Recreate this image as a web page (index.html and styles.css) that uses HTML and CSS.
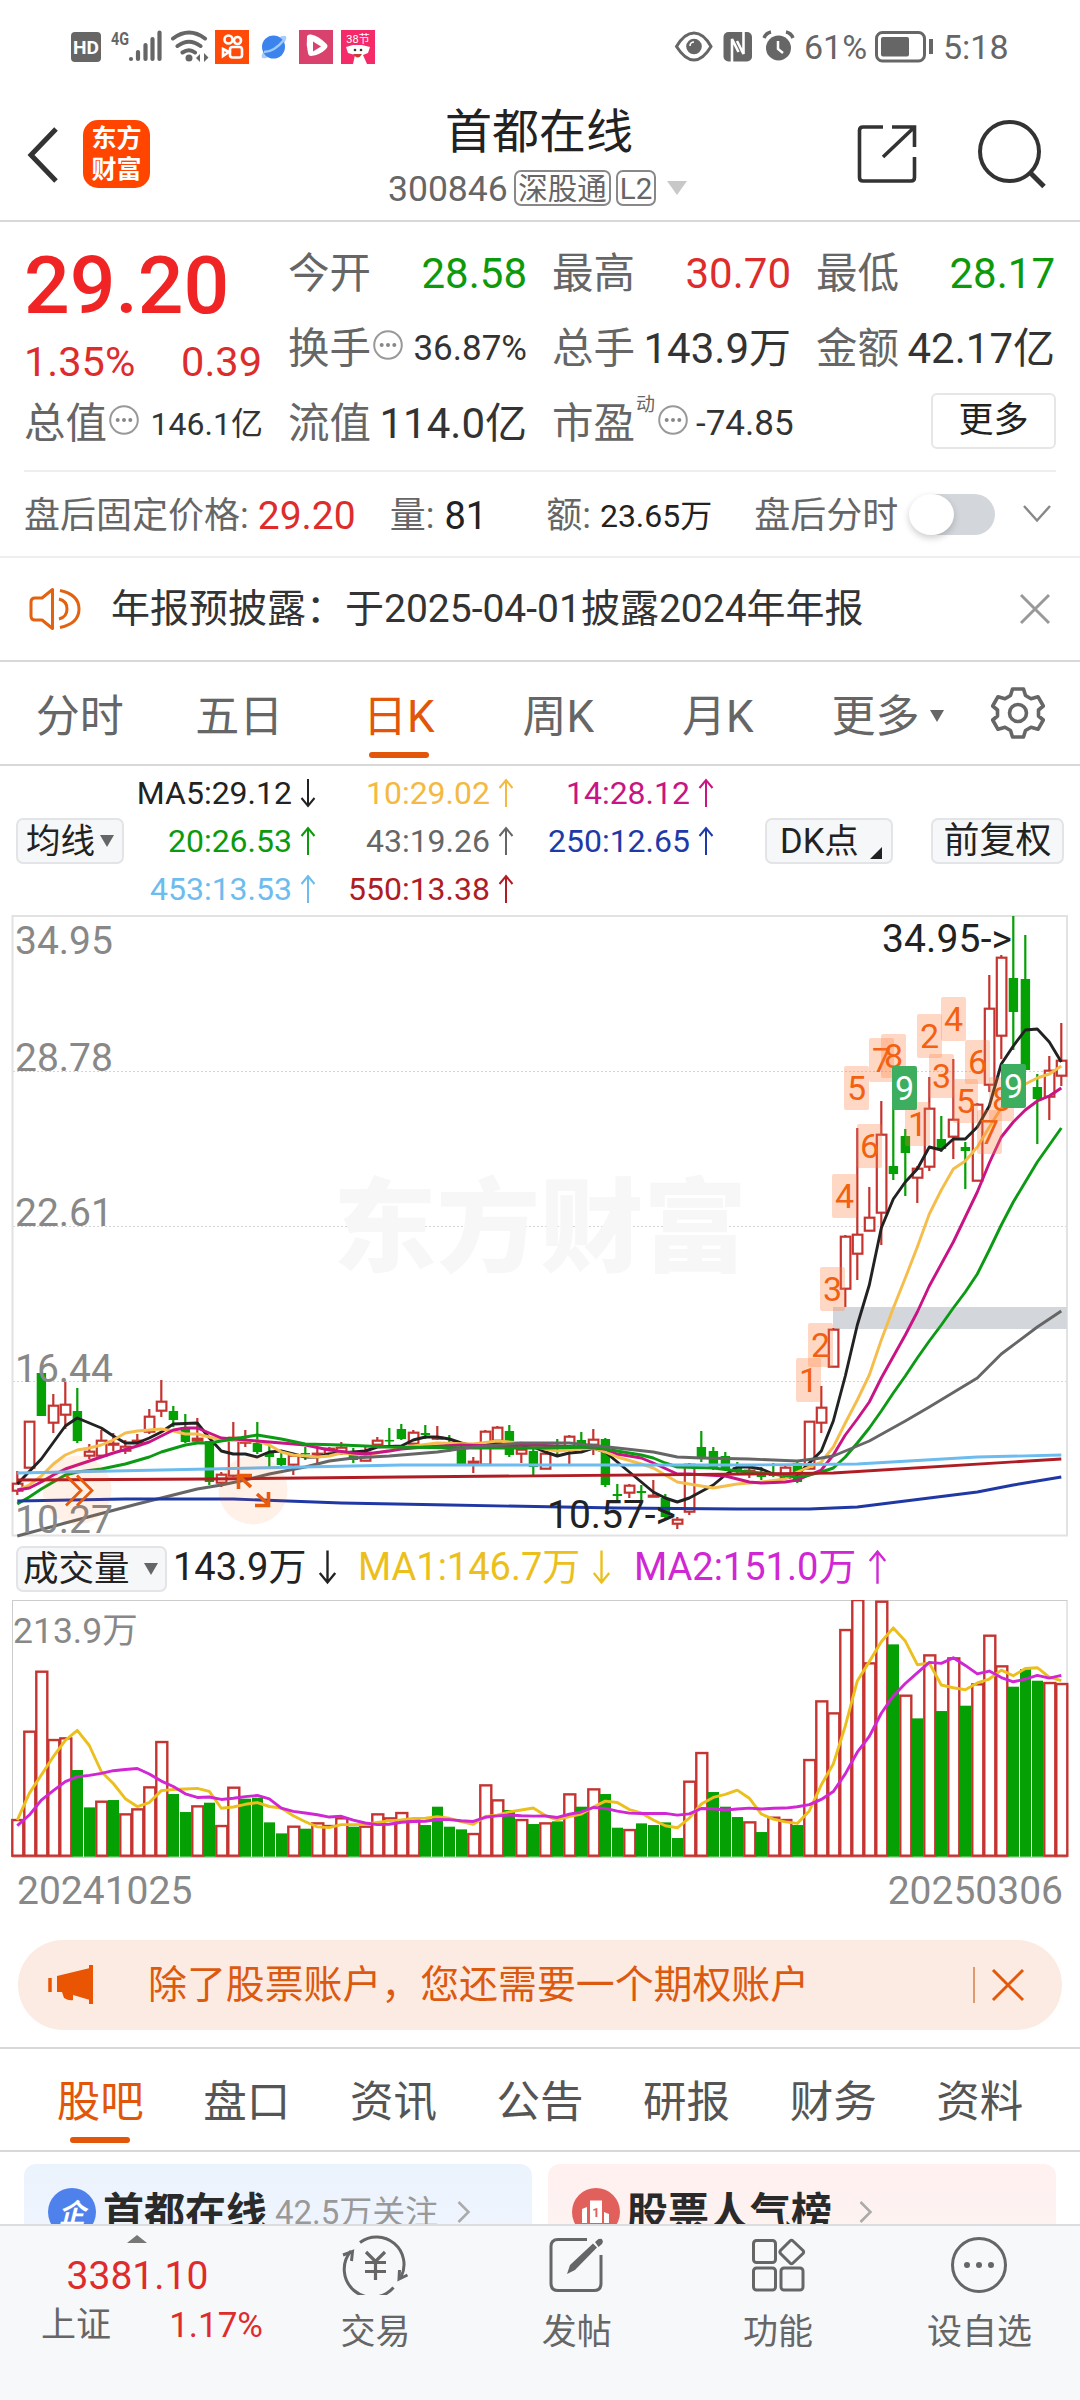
FILE: index.html
```html
<!DOCTYPE html>
<html lang="zh-CN">
<head>
<meta charset="utf-8">
<title>首都在线 300846</title>
<link rel="stylesheet" href="styles.css">
</head>
<body>
<div class="app">
  <div class="status">
    <div class="status-left">
      <svg width="276" height="36" viewBox="70 29 276 36">
        <rect x="71" y="32" width="30" height="30" rx="4" fill="#666"/>
        <text x="86" y="53.500" font-size="19" font-weight="700" fill="#fff" text-anchor="middle" textLength="26" lengthAdjust="spacingAndGlyphs">HD</text>
        <text x="111" y="44.500" font-size="18" font-weight="700" fill="#666" textLength="18" lengthAdjust="spacingAndGlyphs">4G</text>
        <path d="M131 59v0M138 52v7M145.500 45v14M152.500 39v20M159.500 32.500v26.500" stroke="#666" stroke-width="4.200" stroke-linecap="round"/>
        <g fill="none" stroke="#666" stroke-width="4" stroke-linecap="round"><path d="M173 38.500q16-12 32 0M177.500 46q11.500-8.500 23 0M182.500 52.500q6.500-4.500 12.500 0"/></g>
        <circle cx="189" cy="58" r="3.500" fill="#666"/>
        <path d="M200 54v8l-4-4zM204 53v9l4.500-4.500z" fill="#666"/>
        <rect x="215" y="30" width="34" height="34" fill="#ff4a08"/>
        <g fill="none" stroke="#fff" stroke-width="2.600"><circle cx="228.500" cy="39.500" r="4"/><circle cx="237.500" cy="40.500" r="3.500"/><rect x="230" y="47" width="12" height="10.500" rx="2.500"/><path d="M223 49l6 3-6 4z"/></g>
        <ellipse cx="274" cy="47" rx="16" ry="5" fill="#a9cdfa" transform="rotate(-42 274 47)"/>
        <circle cx="273.500" cy="47" r="11.500" fill="#3d83ee"/>
        <path d="M264 52q10 0 20-12" stroke="#9bcafc" stroke-width="2.500" fill="none"/>
        <rect x="299" y="30" width="34" height="34" fill="#d9426c"/>
        <path d="M307 37q0-3 4-2.500 7 1 15 9 3 2.500 0 5.500-6 6-15 7-2.500 0-3-3-2-8-1-16z" fill="#fff"/><path d="M313 41.500l8 5-8 5z" fill="#d9426c"/>
      </svg>
      <svg class="promo" width="34" height="36" viewBox="341 29 34 36">
        <rect x="341" y="30" width="34" height="34" fill="#f52a68"/>
        <text x="358" y="43" font-size="11" fill="#fff" text-anchor="middle">38节</text>
        <path d="M346 47l7-2h9l8 2-2 6-5 2 4 9h-14l2-9-7-2z" fill="#fff"/><path d="M353 54q5 7 9 0z" fill="#c93c35"/><circle cx="355" cy="50" r="1.300" fill="#333"/><circle cx="361" cy="50" r="1.300" fill="#333"/>
      </svg>
    </div>
    <div class="status-right">
      <svg width="122" height="36" viewBox="674 29 122 36">
        <path d="M676.500 46.500q8-13.500 17.500-13.500t17 13.500q-8 13.500-17 13.500t-17.500-13.500z" fill="none" stroke="#666" stroke-width="3"/>
        <circle cx="694" cy="46.500" r="7.800" fill="#666"/><path d="M690 46a4 4 0 0 1 4-4" stroke="#fff" stroke-width="1.600" fill="none"/>
        <rect x="723.500" y="32" width="28.500" height="29.500" rx="5" fill="#666"/>
        <path d="M732 63V39l6.500 13M743.500 30v24L737 41" fill="none" stroke="#fff" stroke-width="2.600"/>
        <circle cx="778.500" cy="48" r="12.500" fill="#666"/><path d="M778 41v8l5 4" stroke="#fff" stroke-width="2.500" fill="none"/>
        <path d="M764 38q2-5 7-6M786 32q5 1 7 6" stroke="#666" stroke-width="3.500" fill="none"/>
      </svg>
      <span class="status-text pct">61%</span>
      <svg width="60" height="34" viewBox="874 30 60 34">
        <rect x="876.500" y="32.500" width="48" height="28.500" rx="6" fill="none" stroke="#666" stroke-width="3"/>
        <rect x="881" y="37" width="28" height="19.500" rx="2" fill="#666"/><path d="M931 39v15" stroke="#666" stroke-width="4"/>
      </svg>
      <span class="status-text clock">5:18</span>
    </div>
  </div>

  <header class="header">
    <div class="head-left">
      <svg width="36" height="58" viewBox="25 125 36 58"><path d="M56 129L31 155l25 26" fill="none" stroke="#333" stroke-width="5"/></svg>
      <div class="logo"><span>东方</span><span>财富</span></div>
    </div>
    <div class="head-mid">
      <div class="title">首都在线</div>
      <div class="sub"><span class="code">300846</span><span class="tag">深股通</span><span class="tag tag-l2">L2</span><i class="caret"></i></div>
    </div>
    <div class="head-right">
      <svg width="60" height="60" viewBox="857 125 60 60"><path d="M883 128H863q-3.500 0-3.500 3.500v47q0 3.500 3.500 3.500h48q3.500 0 3.500-3.500V158M892 128h22.500v20M913 129.500L883 158" fill="none" stroke="#333" stroke-width="3.600"/></svg>
      <svg width="70" height="70" viewBox="976 119 70 70"><circle cx="1009.500" cy="151.500" r="29.500" fill="none" stroke="#333" stroke-width="4"/><path d="M1030 172.500l14 14" stroke="#333" stroke-width="5"/></svg>
    </div>
  </header>

  <section class="quote">
    <div class="price-block">
      <div class="price">29.20</div>
      <div class="change"><span>1.35%</span><span>0.39</span></div>
    </div>
    <div class="cell"><span class="lab">今开</span><b class="dn">28.58</b></div>
    <div class="cell"><span class="lab">最高</span><b class="up">30.70</b></div>
    <div class="cell"><span class="lab">最低</span><b class="dn">28.17</b></div>
    <div class="cell"><span class="lab">换手</span><svg class="more-dot"><use href="#dots"/></svg><b class="m">36.87%</b></div>
    <div class="cell"><span class="lab">总手</span><b>143.9万</b></div>
    <div class="cell"><span class="lab">金额</span><b>42.17亿</b></div>
    <div class="cell"><span class="lab">总值</span><svg class="more-dot"><use href="#dots"/></svg><b class="s">146.1亿</b></div>
    <div class="cell"><span class="lab">流值</span><b>114.0亿</b></div>
    <div class="cell"><span class="lab">市盈</span><span class="sup">动</span><svg class="more-dot pe"><use href="#dots"/></svg><b class="m">-74.85</b></div>
    <div class="cell end"><span class="more-btn">更多</span></div>
  </section>

  <section class="after">
    <span class="al">盘后固定价格:</span><span class="av up av-price">29.20</span>
    <span class="al al-vol">量:</span><span class="av">81</span>
    <span class="al al-amt">额:</span><span class="av small">23.65万</span>
    <span class="al al-min">盘后分时</span><span class="toggle"><i></i></span>
    <svg class="chev" width="30" height="20" viewBox="0 0 30 20"><path d="M2 2l13 14.500L28 2" fill="none" stroke="#888" stroke-width="2.400"/></svg>
  </section>

  <section class="notice">
    <svg width="54" height="48" viewBox="29 584 54 48"><g fill="none" stroke="#e2620f" stroke-width="3"><path d="M52.500 588.500v39L42 619h-7q-4 0-4-4v-14q0-4 4-4h7z" stroke-linejoin="round"/><path d="M59 598q8 2 8 10t-8 10M60 589.500q19 4 19 18.500t-19 18.500"/></g></svg>
    <span class="notice-text">年报预披露：于2025-04-01披露2024年年报</span>
    <svg class="x" width="32" height="32" viewBox="0 0 32 32"><path d="M2 2l28 28M30 2L2 30" stroke="#999" stroke-width="3"/></svg>
  </section>

  <nav class="ktabs">
    <span>分时</span><span>五日</span><span class="on">日K</span><span>周K</span><span>月K</span><span class="kmore">更多<i class="caret"></i></span>
    <svg width="54" height="54" viewBox="-27 -27 54 54"><g fill="none" stroke="#666" stroke-width="3.600"><path stroke-linejoin="round" d="M-5.500-24h11l2 6.500 5.500 3.200 7-2 5.300 9.300L20.500-3v6l4.800 4L20 16.300l-7-2-5.500 3.200-2 6.500h-11l-2-6.500-5.500-3.200-7 2L-25.300 7l4.800-4v-6l-4.800-4L-20-16.300l7 2 5.500-3.200z"/><circle r="8.500"/></g></svg>
  </nav>

  <section class="legend">
    <div class="chip ma-chip">均线<i class="caret"></i></div>
    <div class="mas">
      <span class="c-ma5">MA5:29.12<svg class="ar"><use href="#down"/></svg></span><span class="c-ma10">10:29.02<svg class="ar"><use href="#up"/></svg></span><span class="c-ma14">14:28.12<svg class="ar"><use href="#up"/></svg></span>
      <span class="c-ma20">20:26.53<svg class="ar"><use href="#up"/></svg></span><span class="c-ma43">43:19.26<svg class="ar"><use href="#up"/></svg></span><span class="c-ma250">250:12.65<svg class="ar"><use href="#up"/></svg></span>
      <span class="c-ma453">453:13.53<svg class="ar"><use href="#up"/></svg></span><span class="c-ma550">550:13.38<svg class="ar"><use href="#up"/></svg></span>
    </div>
    <div class="chip dk-chip">DK点<i class="corner"></i></div>
    <div class="chip fq-chip">前复权</div>
  </section>
  <svg width="0" height="0" class="defs"><defs>
    <symbol id="up" viewBox="0 0 16 30"><path d="M8 29V2M1.500 10L8 2l6.500 8" fill="none" stroke="currentColor" stroke-width="2"/></symbol>
    <symbol id="down" viewBox="0 0 16 30"><path d="M8 1v27M1.500 20L8 28l6.500-8" fill="none" stroke="currentColor" stroke-width="2"/></symbol>
    <symbol id="dots" viewBox="0 0 30 30"><circle cx="15" cy="15" r="13.800" fill="none" stroke="#999" stroke-width="2"/><g fill="#888"><circle cx="8.700" cy="15" r="2"/><circle cx="15" cy="15" r="2"/><circle cx="21.300" cy="15" r="2"/></g></symbol>
  </defs></svg>

  <svg class="kchart" width="1080" height="626" viewBox="0 12 1080 626">
    <g id="k-grid">
      <path d="M13 171.500H1067M13 326.500H1067M13 481.500H1067" stroke="#d4d4d4" stroke-width="1" stroke-dasharray="2 2"/>
      <text class="watermark" x="333" y="364" textLength="414" lengthAdjust="spacingAndGlyphs">东方财富</text>
      <rect x="12.500" y="16" width="1054.500" height="619.500" fill="none" stroke="#e2e2e2" stroke-width="2"/>
      <rect x="833" y="407" width="234" height="22" fill="#d3d7dc"/>
    </g>
    <g id="k-candles"></g>
    <g id="k-lines"></g>
    <g class="axis"><text x="15" y="54">34.95</text><text x="15" y="171">28.78</text><text x="15" y="326">22.61</text><text x="15" y="482">16.44</text><text x="15" y="633">10.27</text></g>
    <g fill="#ff5a00" fill-opacity=".09"><circle cx="77" cy="590" r="34.500"/><circle cx="253" cy="590" r="34.500"/></g>
    <g fill="none" stroke="#e85a0c" stroke-width="2.800"><path d="M66 575.500L81 590.500 66 605.500M77 575.500L92 590.500 77 605.500"/><path stroke-width="3.600" d="M251 587l-12-11M238.500 589V575.500H252M257 594l12 11M268.500 592v13.500H255"/></g>
    <g id="k-marks"></g>
    <g class="peak"><text x="882" y="52" textLength="130">34.95-&gt;</text><text x="547" y="628" textLength="129">10.57-&gt;</text></g>
  </svg>

  <section class="vol-legend">
    <div class="chip vol-chip">成交量<i class="caret"></i></div>
    <span class="v0">143.9万<svg class="ar big"><use href="#down"/></svg></span>
    <span class="v1">MA1:146.7万<svg class="ar big"><use href="#down"/></svg></span>
    <span class="v2">MA2:151.0万<svg class="ar big"><use href="#up"/></svg></span>
  </section>

  <svg class="vchart" width="1080" height="260" viewBox="0 1600 1080 260">
    <rect x="12.500" y="1600.500" width="1054.500" height="257" fill="none" stroke="#ccc"/>
    <text x="13" y="1642.500" font-size="35.500" fill="#888">213.9万</text>
    <g id="v-bars"></g>
    <g id="v-lines"></g>
  </svg>
  <div class="dates"><span>20241025</span><span>20250306</span></div>

  <section class="banner">
    <svg width="48" height="42" viewBox="47 1964 48 42"><path d="M91 1965v39" stroke="#ea5504" stroke-width="4"/><path d="M50 1978v14" stroke="#ea5504" stroke-width="3.500"/><path d="M90 1968v32l-17-5v5q-4 1-9-2l-2-6h-5v-16z" fill="#ea5504"/></svg>
    <span class="banner-text">除了股票账户，您还需要一个期权账户</span>
    <i class="sep"></i>
    <svg width="34" height="34" viewBox="0 0 34 34"><path d="M2 2l30 30M32 2L2 32" stroke="#e2590c" stroke-width="3"/></svg>
  </section>

  <nav class="tabs"><span class="on">股吧</span><span>盘口</span><span>资讯</span><span>公告</span><span>研报</span><span>财务</span><span>资料</span></nav>

  <section class="cards">
    <div class="card blue">
      <svg width="48" height="48" viewBox="0 0 48 48"><circle cx="24" cy="24" r="24" fill="#4f81ec"/><text x="24" y="35" font-size="27" font-weight="700" font-style="italic" fill="#fff" text-anchor="middle">企</text></svg>
      <b>首都在线</b><span>42.5万关注</span>
      <svg class="go" width="14" height="24" viewBox="0 0 14 24"><path d="M1.500 2l10 10-10 10" fill="none" stroke="#aaa" stroke-width="2.500"/></svg>
    </div>
    <div class="card red">
      <svg width="48" height="48" viewBox="0 0 48 48"><circle cx="24" cy="24" r="24" fill="#e2605c"/><path d="M10 21l5-2v16h-5zM18 12.500h12V35H18zM32 24l5 2v9h-5z" fill="#fff"/><text x="24" y="29" font-size="13" font-weight="700" fill="#e2605c" text-anchor="middle">1</text></svg>
      <b>股票人气榜</b>
      <svg class="go wide" width="14" height="24" viewBox="0 0 14 24"><path d="M1.500 2l10 10-10 10" fill="none" stroke="#aaa" stroke-width="2.500"/></svg>
    </div>
  </section>

  <footer class="bottom">
    <div class="index"><i class="tri"></i><div class="idx">3381.10</div><div class="idx-row"><span>上证</span><span class="up">1.17%</span></div></div>
    <div class="item"><svg width="68" height="60" viewBox="342 2234 68 60"><g fill="none" stroke="#666" stroke-width="3"><path d="M360 2241.500A27.500 27.500 0 0 1 401 2276M393.500 2286.500A27.500 27.500 0 0 1 351 2250"/><path d="M343 2254l9.500-3.500-1 9.500M399.500 2269l-.5 9 8.500-4"/><path d="M366 2251l9.500 9.500 9.500-9.500M365 2261.500h21M365 2270.500h21M375.500 2260v19" stroke-width="3.200"/></g></svg><span>交易</span></div>
    <div class="item"><svg width="60" height="60" viewBox="548 2234 60 60"><path d="M588 2238.500h-29q-7 0-7 7v37q0 7 7 7h36q7 0 7-7V2254" fill="none" stroke="#666" stroke-width="3"/><path d="M568 2273l3-9 23-21.500 4 4L576 2269zM596 2241l3.500-3q3-1 4 1t-.5 4l-3.500 3z" fill="#666"/></svg><span>发帖</span></div>
    <div class="item"><svg width="60" height="60" viewBox="748 2234 60 60"><g fill="none" stroke="#666" stroke-width="3"><rect x="753.500" y="2239.500" width="22" height="22" rx="3"/><rect x="753.500" y="2267" width="22" height="22" rx="3"/><rect x="781" y="2267" width="22" height="22" rx="3"/><path d="M790 2240q1.500-1.500 3 0l10 9.500q1.200 1.500 0 3l-10 9.500q-1.500 1.500-3 0l-9.500-9.500q-1.200-1.500 0-3z"/></g></svg><span>功能</span></div>
    <div class="item"><svg width="60" height="60" viewBox="-30 -30 60 60"><circle r="26.500" fill="none" stroke="#666" stroke-width="3"/><g fill="#666"><circle cx="-12" r="3"/><circle r="3"/><circle cx="12" r="3"/></g></svg><span>设自选</span></div>
  </footer>
</div>
<script src="chart.js"></script>
</body>
</html>
```
FILE: styles.css
```css
* { box-sizing: border-box; }
body { margin: 0; background: #fff; font-family: Roboto, "Noto Sans CJK SC", sans-serif; color: #222; }
i, b { font-style: normal; font-weight: 400; }
svg { display: block; flex: none; }
.app { width: 1080px; height: 2400px; overflow: hidden; display: flex; flex-direction: column; white-space: nowrap; }
.app > * { flex: none; }
.defs { height: 0; }
.up { color: #de2c2c; }
.dn { color: #0c9a0c; }
.caret { display: inline-block; border: solid transparent; border-width: 12px 7px 0; border-top-color: #666; }

.status { height: 92px; padding: 1px 72px 0 70px; display: flex; align-items: center; justify-content: space-between; }
.status-left, .status-right { display: flex; align-items: center; }
.promo { margin-left: -5px; }
.status-text { font-size: 34px; color: #666; line-height: 36px; }
.pct { width: 69px; margin-left: 8px; margin-right: 1px; }
.clock { margin-left: 9px; width: 65px; }

.header { height: 130px; border-bottom: 2px solid #d8d8d8; display: grid; grid-template-columns: 388px 302px 1fr; }
.head-left { display: flex; align-items: center; padding: 0 0 4px 25px; }
.logo { margin-left: 22px; width: 67px; height: 68px; border-radius: 15px; background: #ff4500; color: #fff; font-size: 25px; font-weight: 600; line-height: 31px; padding-top: 3px; display: flex; flex-direction: column; align-items: center; }
.title { font-size: 47px; line-height: 56px; padding-top: 12px; text-align: center; color: #222; }
.sub { display: flex; align-items: center; margin-top: 10px; height: 36px; color: #666; }
.code { font-size: 35.500px; width: 126px; padding-top: 1px; }
.tag { border: 2px solid #888; border-radius: 7px; width: 97px; height: 36px; line-height: 34px; font-size: 29.500px; text-align: center; }
.tag-l2 { width: 40px; margin-left: 5px; }
.sub .caret { margin-left: 11px; border-width: 14px 10.500px 0; border-top-color: #c8c8c8; }
.head-right { display: flex; align-items: center; justify-content: flex-end; gap: 59px; padding: 0 34px 4px 0; }

.quote { margin: 0 24px 0 24px; height: 250px; padding-top: 14px; border-bottom: 2px solid #eee; display: grid; grid-template-columns: repeat(4, 239px); grid-template-rows: repeat(3, 75px); column-gap: 25px; color: #333; }
.price-block { grid-row: span 2; }
.price { font-size: 80.500px; font-weight: 500; line-height: 96px; color: #f02424; padding-top: 2px; height: 106px; }
.change { display: flex; justify-content: space-between; font-size: 41.500px; line-height: 40px; color: #de2c2c; padding-right: 1px; }
.cell { display: flex; align-items: center; }
.cell b { margin-left: auto; font-size: 42px; line-height: 50px; }
.cell b.m { font-size: 35px; }
.cell b.s { font-size: 32px; }
.lab { font-size: 41.500px; line-height: 50px; color: #666; }
.more-dot { width: 30px; height: 30px; margin: -8px 0 0 2px; }
.more-dot.pe { margin-left: 3px; }
.sup { font-size: 19px; line-height: 20px; margin: -38px 0 0 1px; color: #666; }
.cell:has(.sup) b { margin-left: 8px; }
.end { justify-content: flex-end; }
.more-btn { width: 125px; height: 56px; margin: -5px -1px 0 0; border: 2px solid #e6e6e6; border-radius: 6px; font-size: 35px; line-height: 52px; text-align: center; color: #222; }

.after { height: 86px; border-bottom: 2px solid #eee; padding: 4px 28px 0 24px; display: flex; align-items: center; font-size: 36px; line-height: 44px; }
.al { color: #666; }
.av { margin-left: 9px; font-size: 38px; color: #222; }
.av.av-price { color: #de2c2c; font-size: 39px; }
.al-vol { margin-left: 34px; }
.av-price + .al-vol + .av { margin-left: 10px; }
.al-amt { margin-left: 59px; }
.av.small { font-size: 32px; }
.al-min { margin-left: 42px; }
.toggle { margin: -4px 0 0 19px; width: 78px; height: 41px; border-radius: 21px; background: #d3d7dc; }
.toggle i { display: block; width: 45px; height: 41px; margin-left: -8px; border-radius: 50%; background: #fff; box-shadow: 0 3px 7px #0003; }
.chev { margin: -4px 0 0 auto; }

.notice { height: 104px; border-bottom: 2px solid #d8d8d8; padding: 0 29px 0 29px; display: flex; align-items: center; }
.notice-text { font-size: 39px; line-height: 50px; margin-left: 28px; color: #333; flex: 1; }

.ktabs { height: 104px; border-bottom: 2px solid #d8d8d8; display: flex; padding: 0 35px 0 0; align-items: center; font-size: 44px; line-height: 96px; color: #666; }
.ktabs > span { width: 159.500px; text-align: center; padding-top: 6px; height: 100px; }
.ktabs .on { color: #e2560a; }
.on::after { content: ""; display: block; width: 60px; height: 6px; border-radius: 3px; background: #e2560a; margin: -13px auto 0; }
.ktabs .kmore { text-align: left; padding-left: 34px; width: 192px; }
.kmore .caret { margin: 0 0 10px 10px; }
.ktabs svg { margin-left: auto; }

.legend { height: 146px; display: flex; align-items: center; padding: 3px 16px 0; }
.chip { display: flex; align-items: center; height: 46px; border: 2px solid #e2e4e7; border-radius: 7px; background: #f6f7f9; color: #222; font-size: 34.500px; line-height: 42px; }
.ma-chip { width: 108px; padding-left: 8px; }
.ma-chip .caret { margin-left: 5px; }
.mas { display: grid; grid-template-columns: 192px 198px 200px; grid-auto-rows: 48px; font-size: 32px; }
.mas span { display: flex; align-items: center; justify-content: flex-end; }
.ar { width: 16px; height: 30px; margin-left: 8px; }
.ar.big { width: 19px; height: 36px; margin-left: 12px; }
.c-ma5 { color: #222; } .c-ma10 { color: #f5b942; } .c-ma14 { color: #c81484; } .c-ma20 { color: #0c9a0c; }
.c-ma43 { color: #666; } .c-ma250 { color: #1f3aa8; } .c-ma453 { color: #6cbcee; } .c-ma550 { color: #b01c24; }
.dk-chip { width: 128px; margin-left: 51px; padding-left: 13px; }
.corner { border: solid transparent; border-width: 0 0 12px 12px; border-bottom-color: #222; margin: 24px 0 0 11px; }
.fq-chip { width: 133px; margin-left: auto; justify-content: center; font-size: 36px; }

.axis { font-size: 39px; fill: #888; }
.peak { font-size: 39px; fill: #222; }
.watermark { font-size: 102px; font-weight: 900; fill: #f7f7f7; }
.mark { font-size: 34px; text-anchor: middle; }

.vol-legend { height: 62px; padding: 0 0 3px 16px; display: flex; align-items: center; font-size: 38px; line-height: 44px; }
.vol-legend > span { display: flex; align-items: center; margin-top: -2px; }
.vol-chip { width: 151px; font-size: 35.500px; padding-left: 5px; margin-top: 2px; }
.vol-chip .caret { margin-left: 14px; }
.v0 { margin-left: 6px; width: 185px; }
.v1 { color: #ecc01c; width: 276px; }
.v2 { color: #d026d4; }
.dates { display: flex; justify-content: space-between; padding: 7px 17px 0; height: 80px; font-size: 39px; line-height: 48px; color: #888; }

.banner { height: 90px; margin: 0 18px; border-radius: 45px; background: #fcebe2; display: flex; align-items: center; padding: 0 37px 0 29px; }
.banner-text { margin-left: 53px; font-size: 38.900px; line-height: 50px; color: #dc5a10; flex: 1; }
.sep { width: 2px; height: 36px; background: #e09a72; margin-right: 16px; }

.tabs { margin-top: 17px; height: 105px; border: solid #d8d8d8; border-width: 2px 0; display: flex; padding: 0 27px; font-size: 43.500px; line-height: 98px; color: #555; }
.tabs span { flex: 1; text-align: center; padding-top: 5px; }
.tabs .on { color: #e2560a; }
.tabs .on::after { margin-top: -15px; }

.cards { height: 72px; padding: 12px 24px 0; display: flex; gap: 16px; overflow: hidden; }
.card { flex: 1; height: 100px; border-radius: 12px; display: flex; align-items: center; padding: 0 24px 4px; }
.blue { background: linear-gradient(#ebf3fd, #f2f6fe); }
.red { background: linear-gradient(#fef1f0, #fef3f3); }
.card b { font-size: 41px; font-weight: 700; margin: 1px 0 0 7px; color: #2a2a2a; line-height: 56px; }
.card span { font-size: 33px; color: #999; margin: 1px 0 0 8px; line-height: 56px; }
.go { margin-left: 19px; }
.go.wide { margin-left: 27px; }

.bottom { height: 177px; background: #f7f8fa; border-top: 2px solid #dcdde0; display: flex; color: #666; }
.index { width: 275px; display: flex; flex-direction: column; align-items: center; padding-top: 9px; }
.tri { border: solid transparent; border-width: 0 10px 8px; border-bottom-color: #777; }
.idx { font-size: 39px; line-height: 46px; margin-top: 10px; color: #de2c2c; }
.idx-row { align-self: flex-start; margin: 4px 0 0 41px; display: flex; justify-content: space-between; width: 222px; font-size: 35px; line-height: 46px; }
.item { width: 201.300px; display: flex; flex-direction: column; align-items: center; padding-top: 9px; font-size: 35px; line-height: 46px; }
.item span { margin-top: 15px; }
```
FILE: chart.js
```js
const NS = 'http://www.w3.org/2000/svg';
const RED = '#c43531', GREEN = '#04a004';
const cx = i => 17.3 + 12 * i;

function add(parent, tag, attrs, text) {
  const el = document.createElementNS(NS, tag);
  for (const k in attrs) el.setAttribute(k, attrs[k]);
  if (text) el.textContent = text;
  document.getElementById(parent).appendChild(el);
}

// one candle per day: colour, high, body top, body bottom, low
const candles = `r571 583 591 595,r521 521 568 568,g473 473 516 516,r494 505 523 533,r482 504 515 529,g488 511 541 543,r544 551 556 559,r530 540 556 557,r533 543 545 551,r540 546 551 554,r534 540 543 546,r509 516 532 534,r480 501 511 517,g506 511 520 527,g514 527 542 543,r518 538 541 542,g541 541 582 585,r572 574 583 587,r522 537 576 577,r530 541 543 547,g522 543 552 554,g546 553 557 567,g552 558 565 566,r555 555 565 575,g547 553 554 560,r548 553 555 564,r547 548 554 555,r542 547 552 555,g548 555 560 563,r546 552 561 561,r537 540 545 546,g528 540 541 546,g524 529 539 540,r530 532 544 545,g525 533 535 539,r526 537 539 540,g535 542 545 552,g545 547 564 564,r557 561 564 573,r530 531 565 565,r526 527 541 541,g525 531 555 557,r547 549 554 563,g549 551 567 575,r552 553 569 569,g539 545 548 555,r535 536 549 566,g532 540 546 548,r529 539 545 555,g538 539 585 587,g584 594 596 602,r584 585 593 598,g585 591 593 603,r580 595 597 597,g594 598 617 618,r617 619 624 629,r563 564 612 615,g531 547 557 562,g547 551 567 570,g552 556 569 571,g562 567 572 574,r568 570 572 578,g567 573 577 580,g563 574 576 577,r566 567 578 580,g560 563 582 583,r521 521 569 569,r486 507 523 533,r428 429 467 467,r335 336 389 407,r228 334 354 380,r287 317 331 331,r201 234 313 345,g197 266 274 280,g229 236 253 296,r266 268 278 303,r177 208 267 271,g216 239 249 252,r159 219 237 259,g242 247 251 289,r203 204 281 281,r75 108 185 192,r55 57 136 159,g16 78 112 150,g35 79 170 170,g174 187 199 244,r156 170 197 220,r123 160 176 186`
  .split(',').map(s => [s[0], ...s.slice(1).split(' ').map(Number)]);

candles.forEach(([c, high, top, bottom, low], i) => {
  const x = cx(i), color = c === 'r' ? RED : GREEN;
  add('k-candles', 'path', { d: `M${x} ${high}V${top}M${x} ${bottom}V${low}`, stroke: color, 'stroke-width': 2.2 });
  if (c === 'r') {
    const h = Math.max(bottom - top - 1, 1);
    add('k-candles', 'rect', { x: x - 4.5, y: top + 0.7, width: 9.6, height: h, fill: '#fff', stroke: RED, 'stroke-width': 2.2 });
  } else {
    add('k-candles', 'rect', { x: x - 4.6, y: top, width: 9.4, height: Math.max(bottom - top, 1.5), fill: GREEN });
  }
});

// moving averages: day index, y
const averages = [
  ['#222', '0 584,2 559,4 526,5 518,6 523,7 528,8 536,9 543,10 543,11 538,12 532,13 524,15 523,16 538,17 551,18 554,19 554,20 557,21 552,22 551,23 554,24 557,25 557,26 554,29 551,30 547,32 546,33 540,34 537,35 537,36 539,37 543,38 546,40 543,41 543,42 545,43 547,44 552,45 556,46 553,47 552,48 548,49 552,50 562,51 572,53 592,54 598,55 602,56 598,58 585,59 575,60 567,61 567,62 569,63 574,65 575,66 563,67 551,68 521,69 476,70 425,71 385,72 328,73 299,74 282,75 269,76 247,77 250,78 239,79 239,80 227,81 206,82 164,83 146,84 130,85 129,86 142,87 162'],
  ['#f5bd4c', '0 590,1 585,2 576,3 564,4 555,5 550,6 548,7 545,8 540,9 533,10 531,12 529,13 531,14 534,15 534,16 537,17 540,20 541,21 545,22 552,23 555,25 557,26 556,27 553,29 555,30 553,32 548,33 546,35 543,38 544,40 541,42 543,43 546,44 549,45 551,46 550,48 548,49 552,50 557,52 564,53 568,54 575,55 582,57 586,58 588,60 584,62 582,64 579,65 572,66 567,67 562,68 547,69 523,70 500,71 475,72 440,73 408,74 378,75 347,76 314,77 290,78 269,79 261,80 247,81 227,82 208,83 196,84 184,85 178,86 174,87 166'],
  ['#c81484', '0 590,1 588,2 582,3 575,4 569,6 561,8 553,10 546,11 542,12 536,13 530,14 528,15 528,16 533,17 538,18 539,20 541,22 543,24 545,26 550,28 553,29 554,31 551,32 549,34 547,37 545,40 546,43 545,47 547,49 549,50 554,52 558,53 563,55 574,56 574,59 576,61 582,62 583,64 582,65 580,66 575,67 570,68 555,69 535,70 519,71 502,72 478,74 435,75 412,76 386,78 342,79 317,80 292,81 263,82 237,83 222,84 210,85 201,86 196,87 188'],
  ['#0c9a14', '0 604,1 597,2 589,3 582,4 575,5 572,7 569,9 564,11 557,12 552,14 545,15 543,16 543,18 539,19 537,20 535,22 539,24 544,27 545,31 547,38 548,44 548,48 547,50 551,52 555,53 558,54 563,55 567,58 568,60 571,62 573,65 577,66 575,67 572,68 568,69 557,70 543,71 528,72 511,73 493,74 476,75 458,76 441,77 425,78 408,79 392,80 374,81 350,82 325,83 302,84 282,85 262,86 245,87 228'],
  ['#666', '0 636,4 623,10 604,13 595,15 589,17 585,19 580,21 574,24 567,26 561,28 558,31 556,33 554,35 552,38 547,42 543,46 543,50 548,53 552,55 557,57 558,61 559,65 561,67 558,68 556,71 541,74 521,76 507,80 478,82 454,85 427,87 411'],
  ['#2038a4', '0 601,9 599,18 599,27 603,36 605,50 608,60 609,66 609,70 607,80 592,83 585,87 577'],
  ['#6cbcf0', '0 573,16 569,32 565,48 565,61 565,70 564,80 557,87 555'],
  ['#b01c24', '0 580,16 579,32 577,61 574,68 573,87 559']
];
averages.forEach(([stroke, s]) => {
  const points = s.split(',').map(p => p.split(' ').map(Number)).map(([i, y]) => [cx(i), y]).join(' ');
  add('k-lines', 'polyline', { points, fill: 'none', stroke, 'stroke-width': 2.9, 'stroke-linejoin': 'round' });
});

// nine-turn counters
[[796, 458, 1], [808, 423, 2], [820, 367, 3], [832, 274, 4], [844, 166, 5], [857, 224, 6], [869, 138, 7], [881, 134, 8], [905, 202, 1],
 [917, 114, 2], [929, 154, 3], [941, 97, 4], [953, 179, 5], [965, 140, 6], [977, 210, 7], [989, 177, 8], [892, 166, 9], [1001, 164, 9]
].forEach(([x, y, n]) => {
  const nine = n === 9;
  add('k-marks', 'rect', { x, y, width: 25, height: 44, rx: 2, fill: nine ? '#3dae60' : '#ff7f40', 'fill-opacity': nine ? 1 : 0.3 });
  add('k-marks', 'text', { x: x + 12.5, y: y + 34, class: 'mark', fill: nine ? '#fff' : '#f26010' }, String(n));
});

const volumes = 'r110,r375,r555,r350,r355,g260,g148,r165,g170,r127,r142,r208,r344,g188,g134,r151,g162,r92,r207,g174,g177,g103,g70,r90,g84,r100,r92,r115,g90,r90,r127,r115,r131,r110,g95,g150,g90,g82,r68,r214,r169,g140,r110,g98,r100,g106,r187,g150,r202,g188,g87,r80,g100,g95,g103,g56,r225,r311,g194,g150,g119,r103,g74,r117,r110,g95,r290,r466,r430,r680,r770,r580,r765,g637,r483,g415,r604,g437,r595,g453,r517,r663,r571,g510,g563,g528,r521,r518'
  .split(',').map(s => [s[0], Number(s.slice(1))]);
const base = 1856.7;
volumes.forEach(([c, v], i) => {
  const h = v / 3, x = cx(i);
  if (c === 'r') add('v-bars', 'rect', { x: x - 5, y: base - h, width: 11, height: h - 1, fill: '#fff', stroke: RED, 'stroke-width': 2.4 });
  else add('v-bars', 'rect', { x: x - 5.3, y: base - h, width: 11, height: h, fill: GREEN });
});

function volumeAverage(days, start) {
  return volumes.map((_, i) => {
    if (i < start.length) return start[i];
    let sum = 0;
    for (let k = i - days + 1; k <= i; k++) sum += volumes[k][1];
    return sum / days;
  });
}
[['#ecc01c', volumeAverage(5, [110, 190, 245, 300])],
 ['#d026d4', volumeAverage(10, [93, 125, 170, 198, 225, 240, 244, 250, 258])]
].forEach(([stroke, values]) => {
  add('v-lines', 'polyline', { points: values.map((v, i) => [cx(i), base - v / 3]).join(' '), fill: 'none', stroke, 'stroke-width': 2.9, 'stroke-linejoin': 'round' });
});
```
